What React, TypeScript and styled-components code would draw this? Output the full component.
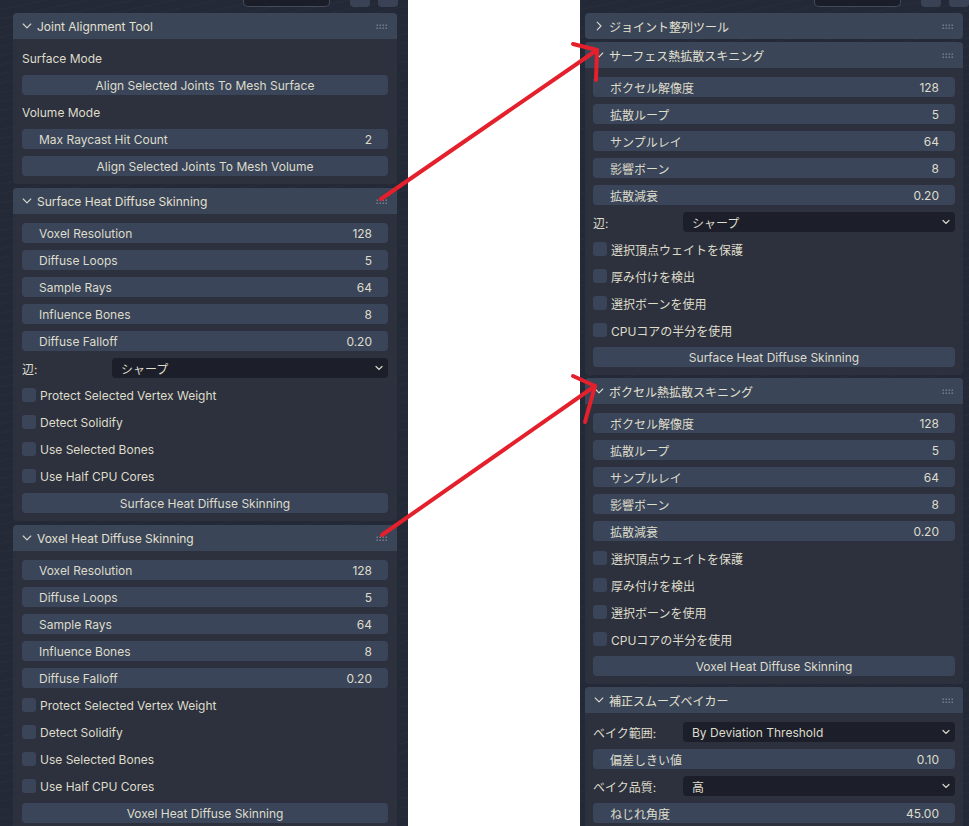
import React from "react";
import styled, { createGlobalStyle } from "styled-components";

const GlobalStyle = createGlobalStyle`
  html, body {
    margin: 0;
    padding: 0;
    background: #ffffff;
  }
  body {
    font-family: "Inter", "Noto Sans CJK JP", sans-serif;
  }
`;

const Page = styled.div`
  position: relative;
  width: 969px;
  height: 826px;
  display: flex;
  justify-content: space-between;
  background: #ffffff;
  overflow: hidden;
`;

const Shot = styled.div<{ $width: number; $padLeft: number; $padRight: number }>`
  width: ${(p) => p.$width}px;
  height: 826px;
  box-sizing: border-box;
  padding: 0 ${(p) => p.$padRight}px 0 ${(p) => p.$padLeft}px;
  background-color: #242937;
  background-image: repeating-linear-gradient(
    168deg,
    rgba(255, 255, 255, 0.018) 0px,
    rgba(255, 255, 255, 0.018) 1px,
    transparent 1px,
    transparent 9px
  );
  display: flex;
  flex-direction: column;
  overflow: hidden;
  font-family: "Inter", "Noto Sans CJK JP", sans-serif;
  color: #dedccb;
  font-size: 12px;
`;

const TopBar = styled.div<{ $offset: number }>`
  height: 13px;
  flex-shrink: 0;
  display: flex;
  justify-content: flex-end;
  align-items: flex-start;
  gap: 8px;
  margin-right: ${(p) => p.$offset}px;
`;

const TopField = styled.div`
  width: 85px;
  height: 6px;
  margin-right: 12px;
  background: #1b1e29;
  border: 1px solid #434a5a;
  border-top: none;
  border-radius: 0 0 5px 5px;
`;

const TopButton = styled.div`
  width: 20px;
  height: 7px;
  background: #3a4355;
  border-radius: 0 0 4px 4px;
`;

const Panel = styled.section<{ $gap: number }>`
  flex-shrink: 0;
  margin-bottom: ${(p) => p.$gap}px;
  border-radius: 4px;
  overflow: hidden;
  background: #2d313d;
`;

const PanelHeader = styled.div`
  height: 26px;
  background: #3b4558;
  display: flex;
  align-items: center;
  gap: 5px;
  padding: 0 9px;
  font-size: 12px;
  color: #e2e0d0;
`;

const HeaderTitle = styled.span`
  flex: 1;
  white-space: nowrap;
`;

const PanelBody = styled.div<{ $padX: number }>`
  padding: 9px ${(p) => p.$padX}px 8px;
  display: flex;
  flex-direction: column;
  gap: 7px;
`;

const TextRow = styled.div`
  height: 20px;
  display: flex;
  align-items: center;
`;

const NumField = styled.div`
  height: 20px;
  background: #3a4559;
  border-radius: 4px;
  display: flex;
  align-items: center;
  justify-content: space-between;
  padding: 0 16px 0 17px;
`;

const ActionButton = styled.div`
  height: 20px;
  background: #3a4559;
  border-radius: 4px;
  display: flex;
  align-items: center;
  justify-content: center;
`;

const CheckRow = styled.div`
  height: 20px;
  display: flex;
  align-items: center;
  gap: 4px;
`;

const CheckBox = styled.span`
  width: 14px;
  height: 14px;
  border-radius: 3px;
  background: #3a4559;
  flex-shrink: 0;
`;

const SelectRow = styled.div`
  height: 20px;
  display: grid;
  grid-template-columns: 90px 1fr;
  align-items: center;
`;

const SelectBox = styled.div`
  height: 20px;
  background: #1c1f2a;
  border-radius: 4px;
  display: flex;
  align-items: center;
  justify-content: space-between;
  padding: 0 4px 0 9px;
`;

const Overlay = styled.svg`
  position: absolute;
  left: 0;
  top: 0;
  pointer-events: none;
`;

const Chevron = ({ open }: { open: boolean }) => (
  <svg width="10" height="10" viewBox="0 0 10 10" style={{ flexShrink: 0 }}>
    <path
      d={open ? "M1.2 3 L5 6.8 L8.8 3" : "M3.2 1.2 L7 5 L3.2 8.8"}
      fill="none"
      stroke="#d6d6ca"
      strokeWidth="1.1"
      strokeLinecap="round"
      strokeLinejoin="round"
    />
  </svg>
);

const Grip = () => (
  <svg width="12" height="5" viewBox="0 0 12 5" style={{ flexShrink: 0 }}>
    {[0, 1].map((r) =>
      [0, 1, 2, 3].map((c) => (
        <rect key={`${r}-${c}`} x={c * 3 + 0.5} y={r * 3 + 0.5} width="1.4" height="1.4" fill="#7d8595" />
      ))
    )}
  </svg>
);

const SmallDown = () => (
  <svg width="10" height="8" viewBox="0 0 10 8">
    <path d="M2 2.5 L5 5.5 L8 2.5" fill="none" stroke="#d8d8cc" strokeWidth="1.2" strokeLinecap="round" />
  </svg>
);

type Item =
  | { kind: "text"; label: string }
  | { kind: "num"; label: string; value: string }
  | { kind: "button"; label: string }
  | { kind: "check"; label: string }
  | { kind: "select"; label: string; value: string };

type Section = { title: string; open: boolean; items?: Item[] };

const skinningItems = (
  labels: string[],
  values: string[],
  checks: string[],
  button: string,
  edge?: string
): Item[] => {
  const nums: Item[] = labels.map((l, i) => ({ kind: "num", label: l, value: values[i] }));
  const sel: Item[] = edge ? [{ kind: "select", label: edge, value: "シャープ" }] : [];
  const chk: Item[] = checks.map((c) => ({ kind: "check", label: c }));
  return [...nums, ...sel, ...chk, { kind: "button", label: button }];
};

const values = ["128", "5", "64", "8", "0.20"];
const enNums = ["Voxel Resolution", "Diffuse Loops", "Sample Rays", "Influence Bones", "Diffuse Falloff"];
const enChecks = ["Protect Selected Vertex Weight", "Detect Solidify", "Use Selected Bones", "Use Half CPU Cores"];
const jaNums = ["ボクセル解像度", "拡散ループ", "サンプルレイ", "影響ボーン", "拡散減衰"];
const jaChecks = ["選択頂点ウェイトを保護", "厚み付けを検出", "選択ボーンを使用", "CPUコアの半分を使用"];

const leftSections: Section[] = [
  {
    title: "Joint Alignment Tool",
    open: true,
    items: [
      { kind: "text", label: "Surface Mode" },
      { kind: "button", label: "Align Selected Joints To Mesh Surface" },
      { kind: "text", label: "Volume Mode" },
      { kind: "num", label: "Max Raycast Hit Count", value: "2" },
      { kind: "button", label: "Align Selected Joints To Mesh Volume" },
    ],
  },
  {
    title: "Surface Heat Diffuse Skinning",
    open: true,
    items: skinningItems(enNums, values, enChecks, "Surface Heat Diffuse Skinning", "辺:"),
  },
  {
    title: "Voxel Heat Diffuse Skinning",
    open: true,
    items: skinningItems(enNums, values, enChecks, "Voxel Heat Diffuse Skinning"),
  },
];

const rightSections: Section[] = [
  { title: "ジョイント整列ツール", open: false },
  {
    title: "サーフェス熱拡散スキニング",
    open: true,
    items: skinningItems(jaNums, values, jaChecks, "Surface Heat Diffuse Skinning", "辺:"),
  },
  {
    title: "ボクセル熱拡散スキニング",
    open: true,
    items: skinningItems(jaNums, values, jaChecks, "Voxel Heat Diffuse Skinning"),
  },
  {
    title: "補正スムーズベイカー",
    open: true,
    items: [
      { kind: "select", label: "ベイク範囲:", value: "By Deviation Threshold" },
      { kind: "num", label: "偏差しきい値", value: "0.10" },
      { kind: "select", label: "ベイク品質:", value: "高" },
      { kind: "num", label: "ねじれ角度", value: "45.00" },
    ],
  },
];

const renderItem = (item: Item, i: number) => {
  switch (item.kind) {
    case "text":
      return <TextRow key={i}>{item.label}</TextRow>;
    case "num":
      return (
        <NumField key={i}>
          <span>{item.label}</span>
          <span>{item.value}</span>
        </NumField>
      );
    case "button":
      return <ActionButton key={i}>{item.label}</ActionButton>;
    case "check":
      return (
        <CheckRow key={i}>
          <CheckBox />
          <span>{item.label}</span>
        </CheckRow>
      );
    case "select":
      return (
        <SelectRow key={i}>
          <span>{item.label}</span>
          <SelectBox>
            <span>{item.value}</span>
            <SmallDown />
          </SelectBox>
        </SelectRow>
      );
  }
};

const PanelStack = ({ sections, padX, gap }: { sections: Section[]; padX: number; gap: number }) => (
  <>
    {sections.map((s) => (
      <Panel key={s.title} $gap={gap}>
        <PanelHeader>
          <Chevron open={s.open} />
          <HeaderTitle>{s.title}</HeaderTitle>
          <Grip />
        </PanelHeader>
        {s.open && s.items && <PanelBody $padX={padX}>{s.items.map(renderItem)}</PanelBody>}
      </Panel>
    ))}
  </>
);

const Arrow = ({ from, tip, wingA, wingB }: { from: number[]; tip: number[]; wingA: number[]; wingB: number[] }) => (
  <g fill="none" stroke="#e3202b" strokeWidth="4" strokeLinecap="round" strokeLinejoin="round">
    <line x1={from[0]} y1={from[1]} x2={tip[0]} y2={tip[1]} />
    <polyline points={`${wingA[0]},${wingA[1]} ${tip[0]},${tip[1]} ${wingB[0]},${wingB[1]}`} />
  </g>
);

const App = () => {
  return (
    <>
      <GlobalStyle />
      <Page>
        <Shot $width={408} $padLeft={13} $padRight={11}>
          <TopBar $offset={-1}>
            <TopField />
            <TopButton />
            <TopButton />
          </TopBar>
          <PanelStack sections={leftSections} padX={9} gap={4} />
        </Shot>
        <Shot $width={389} $padLeft={5} $padRight={6}>
          <TopBar $offset={-6}>
            <TopField />
            <TopButton />
            <TopButton />
          </TopBar>
          <PanelStack sections={rightSections} padX={8} gap={3} />
        </Shot>
        <Overlay width="969" height="826" viewBox="0 0 969 826">
          <Arrow from={[381, 199]} tip={[597, 50]} wingA={[573, 44]} wingB={[596, 80]} />
          <Arrow from={[382, 535]} tip={[595, 386]} wingA={[573, 376]} wingB={[585, 422]} />
        </Overlay>
      </Page>
    </>
  );
};

export default App;
